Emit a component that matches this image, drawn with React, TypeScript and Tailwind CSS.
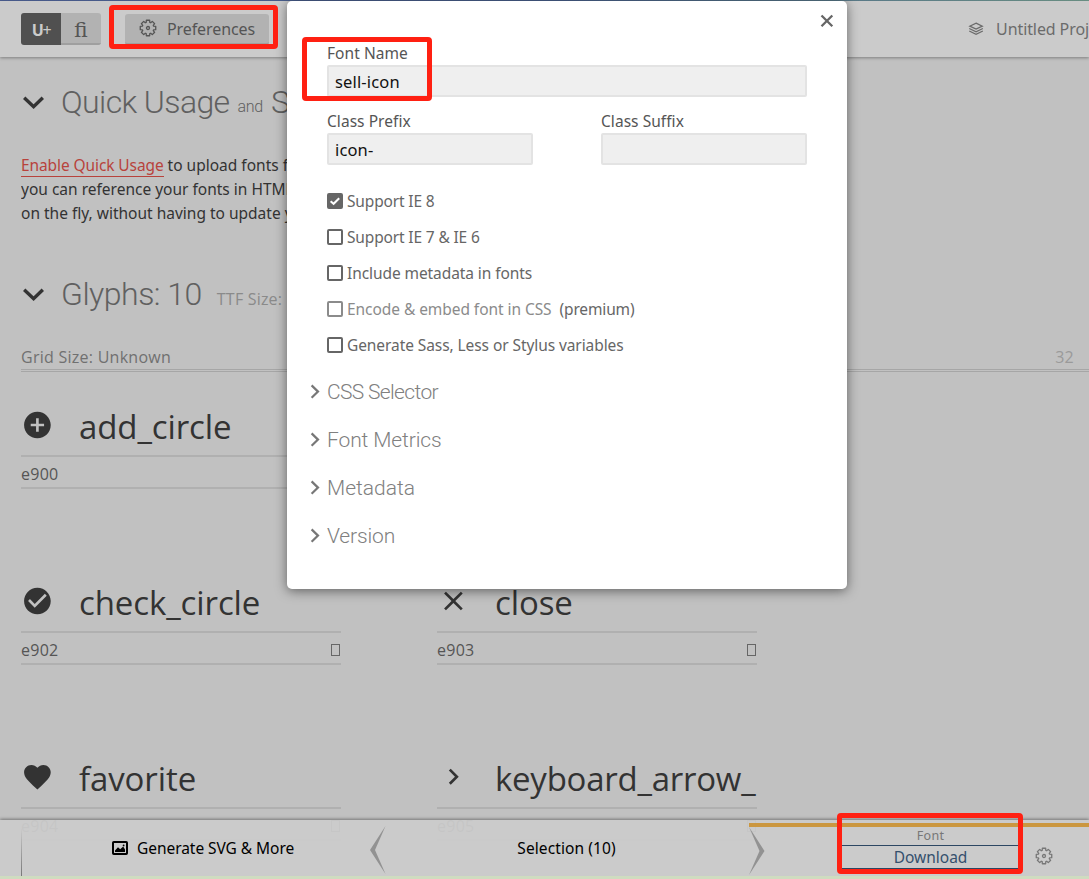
import React from "react";

const GEAR = (() => {
  const pts: string[] = [];
  for (let i = 0; i < 8; i++) {
    const a = (i * Math.PI) / 4;
    const shape: [number, number][] = [
      [-0.31, 5.9],
      [-0.21, 7.9],
      [0.21, 7.9],
      [0.31, 5.9],
    ];
    shape.forEach(([d, r]) => {
      pts.push(`${(9 + r * Math.sin(a + d)).toFixed(2)},${(9 - r * Math.cos(a + d)).toFixed(2)}`);
    });
  }
  return pts.join(" ");
})();

function Gear() {
  return (
    <svg width="18" height="18" viewBox="0 0 18 18" fill="none" stroke="currentColor" strokeWidth="1.3" strokeLinejoin="round">
      <polygon points={GEAR} />
      <circle cx="9" cy="9" r="1.5" />
    </svg>
  );
}

function Layers() {
  return (
    <svg width="18" height="16" viewBox="0 0 18 16" fill="none" stroke="currentColor" strokeWidth="1.4">
      <path d="M9 1.4 L16 4.8 L9 8.2 L2 4.8 Z" />
      <path d="M1.4 7.4 L9 11.1 L16.6 7.4" />
      <path d="M1.4 10.3 L9 14 L16.6 10.3" />
    </svg>
  );
}

function DownChevron() {
  return (
    <svg width="24" height="16" viewBox="0 0 24 16" fill="none" stroke="#333" strokeWidth="3.4">
      <path d="M3.2 3.7 L12.6 12.7 L21.8 3.7" />
    </svg>
  );
}

type GlyphKind = "add" | "check" | "close" | "heart" | "arrow";

const GLYPH_PATHS: Record<GlyphKind, string> = {
  add: "M12 2C6.48 2 2 6.48 2 12s4.48 10 10 10 10-4.48 10-10S17.52 2 12 2zm5 11h-4v4h-2v-4H7v-2h4V7h2v4h4v2z",
  check: "M12 2C6.48 2 2 6.48 2 12s4.48 10 10 10 10-4.48 10-10S17.52 2 12 2zm-2 15l-5-5 1.41-1.41L10 14.17l7.59-7.59L19 8l-9 9z",
  close: "M19 6.41L17.59 5 12 10.59 6.41 5 5 6.41 10.59 12 5 17.59 6.41 19 12 13.41 17.59 19 19 17.59 13.41 12z",
  heart: "M12 21.35l-1.45-1.32C5.4 15.36 2 12.28 2 8.5 2 5.42 4.42 3 7.5 3c1.74 0 3.41.81 4.5 2.09C13.09 3.81 14.76 3 16.5 3 19.58 3 22 5.42 22 8.5c0 3.78-3.4 6.86-8.55 11.54L12 21.35z",
  arrow: "M8.59 16.34l4.58-4.59-4.58-4.59L10 5.75l6 6-6 6z",
};

function GlyphCell(props: { kind: GlyphKind; name: string; code: string; nameClass: string }) {
  return (
    <div className="w-[320px]">
      <div className="flex h-[62px] items-center border-b-2 border-[#b0b0b0]">
        <svg width="32" height="32" viewBox="-0.3 0 24 24" fill="#333" className="shrink-0">
          <path d={GLYPH_PATHS[props.kind]} />
        </svg>
        <span className={"ml-[26px] whitespace-nowrap pt-[3px] font-['Open_Sans',sans-serif] text-[33px] leading-[50px] text-[#333] " + props.nameClass}>
          {props.name}
        </span>
      </div>
      <div className="flex h-[32px] items-center justify-between border-b-2 border-[#b0b0b0] pt-[4px] text-[#555]">
        <span className="font-['Open_Sans',sans-serif] text-[16px] tracking-[0.25px]">{props.code}</span>
        <span className="mr-px h-[12px] w-[9px] border border-[#666]" />
      </div>
    </div>
  );
}

function CheckRow(props: { label: string; checked?: boolean; muted?: boolean; note?: string; className: string }) {
  return (
    <div className={"flex h-9 items-center whitespace-nowrap text-[15.5px] " + (props.muted ? "text-[#8b8b8b]" : "text-[#666]")}>
      <span className={"flex size-4 shrink-0 items-center justify-center rounded-[2px] border-2 border-current " + (props.checked ? "bg-[#666]" : "")}>
        {props.checked && (
          <svg width="12" height="12" viewBox="0 0 12 12" fill="none" stroke="#fff" strokeWidth="2" className="shrink-0">
            <path d="M1.6 6.2 L4.6 8.8 L10.2 3.2" />
          </svg>
        )}
      </span>
      <span className={"ml-1 pt-px " + props.className}>{props.label}</span>
      {props.note && <span className="ml-2 pt-px tracking-[-0.15px] text-[#666]">{props.note}</span>}
    </div>
  );
}

function Disclosure(props: { label: string; className: string }) {
  return (
    <div className="-ml-[17px] flex h-12 items-center text-[#808080]">
      <svg width="10" height="16" viewBox="0 0 10 16" fill="none" stroke="#777" strokeWidth="2.2" className="mr-[7px]">
        <path d="M1.6 1.4 L8 7.6 L1.6 13.8" />
      </svg>
      <span className={"pt-[2px] font-['Roboto',sans-serif] text-[21px] font-light whitespace-nowrap " + props.className}>{props.label}</span>
    </div>
  );
}

function Field(props: { label: string; value: string; wide?: boolean }) {
  return (
    <label className={"block " + (props.wide ? "w-[480px]" : "w-[206px]")}>
      <span className="block h-6 text-[15.5px] leading-[24px] tracking-[0.05px] text-[#555]">{props.label}</span>
      <span className="block h-8 rounded-[2px] border-2 border-[#e3e3e3] bg-[#efefef] pl-[6px] text-[16.5px] leading-[30px] tracking-[0.15px] text-[#111]">
        {props.value}
      </span>
    </label>
  );
}

export default function App() {
  return (
    <div className="relative h-[879px] w-[1089px] overflow-hidden bg-[#c1c1c1] font-['Noto_Sans',sans-serif]">
      <div className="h-px bg-linear-to-r from-[#4c5f92] via-[#4c6595] to-[#6f968a]" />
      <header className="relative flex h-14 items-center bg-[#cbcbcb] pl-[21px] shadow-[0_1px_3px_rgba(0,0,0,0.35)]">
        <div className="flex h-8 w-20 overflow-hidden rounded-[3px]">
          <div className="flex w-10 items-center justify-center bg-[#505050] pt-[2px] text-[16px] font-bold tracking-[-1.5px] text-[#cbcbcb]">
            U<span className="font-normal">+</span>
          </div>
          <div className="flex w-10 items-center justify-center border-b-2 border-[#9f9f9f] bg-[#b2b2b2] pt-[3px] font-['Noto_Serif','DejaVu_Serif',serif] text-[20px] text-[#555]">
            ﬁ
          </div>
        </div>
        <div className="ml-6 flex h-[31px] w-36 items-center rounded-[3px] border-b-2 border-[#9f9f9f] bg-[#b2b2b2] pl-[14px] text-[#555]">
          <Gear />
          <span className="ml-[10px] pt-[2px] text-[16px] tracking-[-0.1px]">Preferences</span>
        </div>
        <div className="ml-auto flex w-[121px] items-center whitespace-nowrap text-[#6b6b6b]">
          <Layers />
          <span className="ml-[12px] text-[16px] tracking-[-0.1px]">Untitled Proj</span>
        </div>
      </header>

      <main className="pl-[21px]">
        <h1 className="mt-[22px] flex h-[46px] items-center whitespace-nowrap font-['Roboto',sans-serif] text-[32px] font-light tracking-[-0.6px] text-[#606060]">
          <DownChevron />
          <span className="ml-[16px]">Quick Usage</span>
          <span className="ml-2 pt-[9px] text-[16px] tracking-[-0.3px]">and</span>
          <span className="ml-2">S</span>
        </h1>
        <p className="mt-[28px] w-[274px] overflow-hidden whitespace-nowrap text-[15.5px] leading-6 text-[#333]">
          <span className="border-b border-[#b8433c] tracking-[-0.1px] text-[#b8433c]">Enable Quick Usage</span> to upload fonts f
          <br />
          you can reference your fonts in HTML
          <br />
          on the fly, without having to update y
        </p>
        <h2 className="mt-[46px] flex h-[46px] items-center whitespace-nowrap font-['Roboto',sans-serif] text-[32px] font-light tracking-[-0.5px] text-[#606060]">
          <DownChevron />
          <span className="ml-[16px]">Glyphs: 10</span>
          <span className="ml-[15px] pt-[9px] font-['Open_Sans',sans-serif] text-[16px] font-normal tracking-[0.2px] text-[#8a8a8a]">TTF Size:</span>
        </h2>
        <div className="mt-[28px] flex h-[27px] justify-between border-b-3 border-double border-[#a6a6a6] pr-[15px] font-['Open_Sans',sans-serif] text-[16px] leading-6 tracking-[0.26px]">
          <span className="text-[#707070]">Grid Size: Unknown</span>
          <span className="text-[#9a9a9a]">32</span>
        </div>
        <div className="mt-[23px] grid grid-cols-[320px_320px] gap-x-24 gap-y-[82px]">
          <GlyphCell kind="add" name="add_circle" code="e900" nameClass="tracking-[-0.1px]" />
          <div />
          <GlyphCell kind="check" name="check_circle" code="e902" nameClass="tracking-[-0.1px]" />
          <GlyphCell kind="close" name="close" code="e903" nameClass="tracking-[-0.1px]" />
          <GlyphCell kind="heart" name="favorite" code="e904" nameClass="tracking-[-0.1px]" />
          <GlyphCell kind="arrow" name="keyboard_arrow_" code="e905" nameClass="tracking-[-0.25px]" />
        </div>
      </main>

      <footer className="absolute inset-x-0 bottom-0 h-[59px] border-b-3 border-[#cfdcc0] bg-[#cbcbcb]/95 shadow-[0_-1px_3px_rgba(0,0,0,0.4)]">
        <div className="flex h-full text-[15.5px] text-black">
          <div className="flex w-[349px] items-center">
            <div className="ml-[21px] h-[48px] w-px self-end bg-linear-to-b from-transparent to-[#777]" />
            <svg width="16" height="14" viewBox="0 0 16 14" className="ml-[90px]">
              <rect x="1" y="1" width="14" height="12" rx="0.8" fill="none" stroke="#000" strokeWidth="2" />
              <path d="M3 11 V9.6 L6 6.2 L8.2 8.2 L11.2 5.6 L13 8.6 V11 Z" />
              <circle cx="11.6" cy="4.4" r="0.9" />
            </svg>
            <span className="ml-[9px] pt-px whitespace-nowrap tracking-[-0.05px]">Generate SVG &amp; More</span>
          </div>
          <svg width="16" height="48" viewBox="0 0 16 48" className="ml-[21px] mt-[6px]" fill="#929292">
            <path d="M15.5 0 L0 24 L15.5 48 L5 24 Z" />
          </svg>
          <div className="flex w-[363px] items-center justify-center pr-[2px] pt-px tracking-[0.1px]">Selection (10)</div>
          <div className="mt-[3px] flex w-[340px] border-t-4 border-[#cb9740]">
            <svg width="16" height="48" viewBox="0 0 16 48" fill="#929292">
              <path d="M0 0 L15.5 24 L0 48 L10.5 24 Z" />
            </svg>
            <div className="ml-[77px] w-[177px] text-center">
              <div className="h-[18px] text-[12.5px] leading-[18px] tracking-[0.3px] text-[#777]">Font</div>
              <div className="h-[24px] border-y border-[#2c4763] text-[15.5px] leading-[22px] text-[#35506d]">Download</div>
            </div>
            <div className="ml-[16px] mt-[20px] text-[#777]">
              <Gear />
            </div>
          </div>
        </div>
      </footer>

      <section className="absolute left-[287px] top-px h-[588px] w-[560px] rounded-[5px] bg-white pl-10 pt-10 shadow-[0_2px_12px_rgba(0,0,0,0.5)]">
        <svg width="14" height="14" viewBox="0 0 14 14" fill="none" stroke="#666" strokeWidth="2.3" className="absolute right-[13px] top-[13px]">
          <path d="M1.5 1.5 L12.3 12.3 M12.3 1.5 L1.5 12.3" />
        </svg>
        <Field label="Font Name" value="sell-icon" wide />
        <div className="mt-3 flex gap-[68px]">
          <Field label="Class Prefix" value="icon-" />
          <Field label="Class Suffix" value="" />
        </div>
        <div className="mt-[18px]">
          <CheckRow label="Support IE 8" checked className="tracking-[-0.15px]" />
          <CheckRow label="Support IE 7 & IE 6" className="tracking-[-0.15px]" />
          <CheckRow label="Include metadata in fonts" className="tracking-[-0.08px]" />
          <CheckRow label="Encode & embed font in CSS" muted note="(premium)" className="tracking-[-0.06px]" />
          <CheckRow label="Generate Sass, Less or Stylus variables" className="tracking-[-0.08px]" />
        </div>
        <div className="mt-[5px]">
          <Disclosure label="CSS Selector" className="tracking-[-0.65px]" />
          <Disclosure label="Font Metrics" className="tracking-[-0.1px]" />
          <Disclosure label="Metadata" className="" />
          <Disclosure label="Version" className="tracking-[-0.15px]" />
        </div>
      </section>

      <div className="absolute left-[109px] top-[5px] h-[44px] w-[169px] rounded-[4px] border-5 border-[#ff2012]" />
      <div className="absolute left-[302px] top-[37px] h-[64px] w-[130px] rounded-[4px] border-5 border-[#ff2012]" />
      <div className="absolute left-[837px] top-[813px] h-[61px] w-[186px] rounded-[4px] border-5 border-[#ff2012]" />
    </div>
  );
}
